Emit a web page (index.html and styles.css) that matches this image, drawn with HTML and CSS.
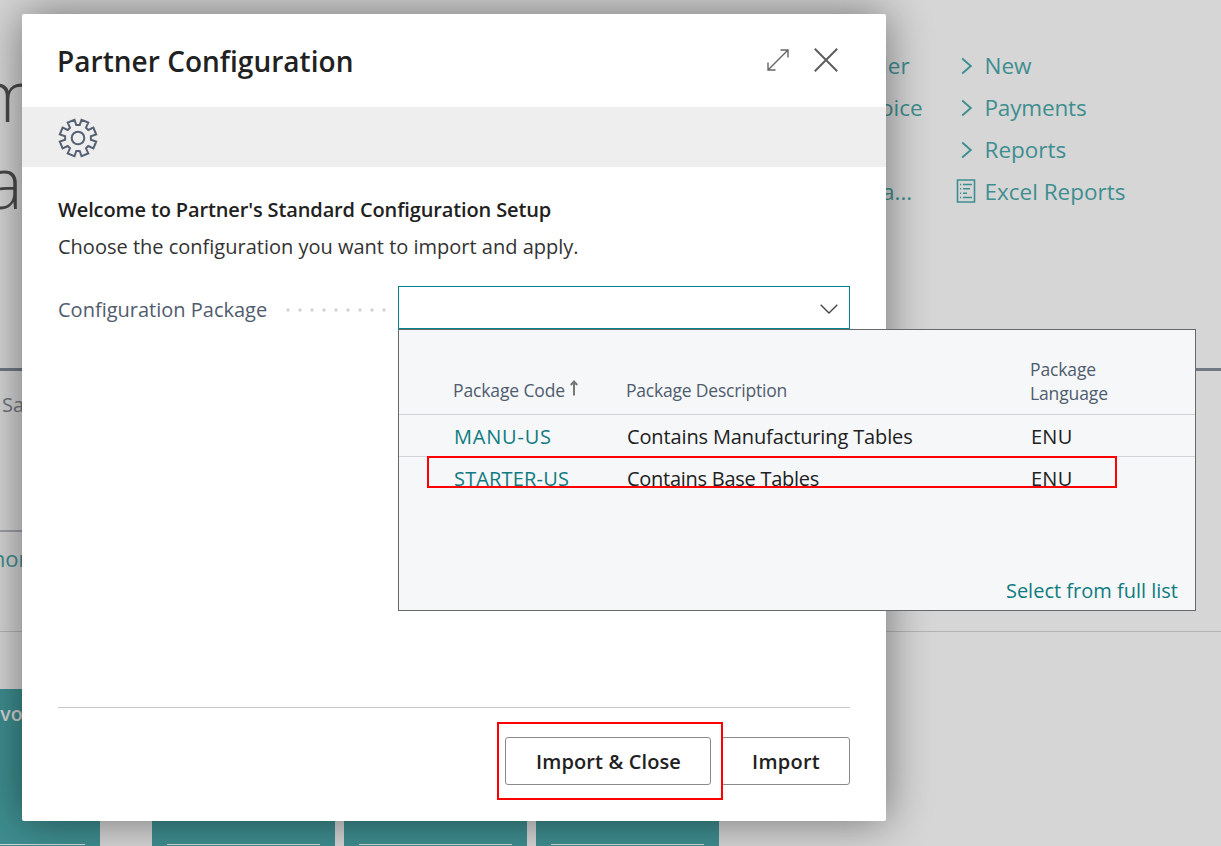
FILE: index.html
```html
<!DOCTYPE html>
<html lang="en">
<head>
<meta charset="utf-8">
<title>Partner Configuration</title>
<link rel="stylesheet" href="styles.css">
</head>
<body>
<div class="app">
  <main class="home">
    <section class="hero">
      <div class="headline"><span class="headline-top">m</span><span class="headline-bottom">a</span></div>
      <ul class="actions actions-create">
        <li class="create-order">der</li>
        <li class="create-invoice">oice</li>
        <li></li>
        <li class="create-other">a...</li>
      </ul>
      <ul class="actions actions-more">
        <li><svg class="chevron" viewBox="0 0 12 18"><path d="M1.2 1.5 L9.8 9 L1.2 16.5"/></svg><span>New</span></li>
        <li><svg class="chevron" viewBox="0 0 12 18"><path d="M1.2 1.5 L9.8 9 L1.2 16.5"/></svg><span class="payments">Payments</span></li>
        <li><svg class="chevron" viewBox="0 0 12 18"><path d="M1.2 1.5 L9.8 9 L1.2 16.5"/></svg><span>Reports</span></li>
        <li><svg class="report" viewBox="0 0 20 24"><path d="M1.5 1h17v22h-17z"/><path d="M4 5.5h1.2M7 5.5h9M4 9.8h1.2M7 9.8h7M4 14.2h1.2M7 14.2h4M4 18.5h1.2M7 18.5h9"/></svg><span>Excel Reports</span></li>
      </ul>
    </section>
    <section class="cue"><span class="cue-name">Sales</span></section>
    <section class="more"><a class="more-link">more</a></section>
    <section class="tiles">
      <div class="tile"><span class="tile-name">Invoices</span></div>
      <div class="tile tile-gap"></div>
      <div class="tile"></div>
      <div class="tile"></div>
    </section>
  </main>

  <div class="dialog">
    <header class="dialog-head">
      <h1>Partner Configuration</h1>
      <svg class="expand" viewBox="0 0 22 22"><path d="M1.5 20.5 L20.5 1.5 M13.5 1 H21 V8.5 M1 13.5 V21 H8.5"/></svg>
      <svg class="close" viewBox="0 0 24 24"><path d="M0.8 0.8 L23.2 23.2 M23.2 0.8 L0.8 23.2"/></svg>
    </header>
    <div class="banner">
      <svg class="gear" viewBox="-20 -20 40 40"><path d="M1.7 -12.9L3.5 -18.2L10.3 -15.4L8 -10.3L10.3 -8L15.4 -10.3L18.2 -3.5L12.9 -1.7V1.7L18.2 3.5L15.4 10.3L10.3 8L8 10.3L10.3 15.4L3.5 18.2L1.7 12.9H-1.7L-3.5 18.2L-10.3 15.4L-8 10.3L-10.3 8L-15.4 10.3L-18.2 3.5L-12.9 1.7V-1.7L-18.2 -3.5L-15.4 -10.3L-10.3 -8L-8 -10.3L-10.3 -15.4L-3.5 -18.2L-1.7 -12.9Z"/><circle r="6.3"/></svg>
    </div>
    <div class="dialog-body">
      <h2>Welcome to Partner's Standard Configuration Setup</h2>
      <p class="hint">Choose the configuration you want to import and apply.</p>
      <div class="field">
        <span class="field-label">Configuration Package</span>
        <span class="dots"></span>
        <div class="combo">
          <svg class="caret" viewBox="0 0 18 10"><path d="M0.7 0.7 L9 9 L17.3 0.7"/></svg>
        </div>
      </div>
    </div>
    <footer class="dialog-foot">
      <button class="btn btn-main">Import &amp; Close</button>
      <button class="btn btn-import">Import</button>
    </footer>
  </div>

  <div class="lookup">
    <div class="row head">
      <span class="code">Package Code<svg class="sort" viewBox="0 0 8 16"><path d="M4 15.5V2M0.8 5L4 1.5L7.2 5"/></svg></span>
      <span class="desc">Package Description</span>
      <span class="lang">Package<br>Language</span>
    </div>
    <div class="row"><span class="code code-manu link">MANU-US</span><span class="desc">Contains Manufacturing Tables</span><span class="lang">ENU</span></div>
    <div class="row last"><span class="code code-starter link">STARTER-US</span><span class="desc desc-base">Contains Base Tables</span><span class="lang">ENU</span></div>
    <a class="full-list link">Select from full list</a>
  </div>

  <div class="mark mark-row"></div>
  <div class="mark mark-button"></div>
</div>
</body>
</html>
```
FILE: styles.css
```css
* { box-sizing: border-box; margin: 0; padding: 0; }
body { font-family: "Open Sans", "Noto Sans", sans-serif; background: #d6d6d6; overflow: hidden; }
svg { display: block; flex: none; fill: none; overflow: visible; }
.app { position: relative; width: 1221px; height: 846px; overflow: hidden; }

.home { display: flex; flex-direction: column; height: 846px; color: #3e8e90; }
.hero { display: flex; height: 371px; border-bottom: 3px solid #727985; }
.headline { display: flex; flex-direction: column; width: 872px; padding-top: 51px; font-size: 71px; font-weight: 300; line-height: 87px; color: #4a4a4a; }
.headline-top { margin-left: -24px; }
.headline-bottom { margin-left: -15px; }
.actions { list-style: none; padding-top: 45px; font-size: 22.5px; line-height: 42px; }
.actions li { display: flex; align-items: center; height: 42px; white-space: nowrap; }
.actions-create { display: flex; flex-direction: column; width: 84px; }
.create-order { padding-left: 2px; }
.create-invoice { padding-left: 8px; }
.create-other { padding-left: 10px; }
.payments { letter-spacing: -.17px; }
.chevron { width: 12px; height: 18px; margin: -1px 12px 0 4.5px; stroke: #3e8e90; stroke-width: 1.9; }
.report { width: 20px; height: 24px; margin: -2px 8.5px 0 0; stroke: #3e8e90; stroke-width: 1.6; }

.cue { height: 161px; padding: 19px 0 0 2px; border-bottom: 2px solid #9da1a9; width: 300px; font-size: 20px; line-height: 30px; color: #6f7681; }
.more { height: 100px; padding-top: 11px; border-bottom: 1px solid #b4b4b4; font-size: 22px; line-height: 30px; }
.more-link { margin-left: -15px; }
.tiles { display: flex; gap: 9px; margin: 57px 0 0 -83px; height: 157px; }
.tile { flex: none; width: 183px; padding: 11px 15px 0; background: linear-gradient(#d6d6d6, #d6d6d6) 15px 155px / 153px 1px no-repeat #3e8e90; font-size: 19.5px; font-weight: 600; line-height: 28px; color: #d6d6d6; }
.tile-gap { margin-left: 43px; }
.tile-name { margin-left: 50px; }

.dialog { position: absolute; left: 22px; top: 14px; width: 864px; height: 807px; display: flex; flex-direction: column; background: #fff; border-radius: 2px; box-shadow: 0 0 45px rgba(0, 0, 0, .48); color: #212121; }
.dialog-head { display: flex; align-items: center; height: 93px; padding: 0 48.5px 0 35px; }
h1 { flex: 1; font-size: 28px; font-weight: 600; line-height: 40px; letter-spacing: .03px; }
.expand { width: 22px; height: 22px; margin: -1px 25px 0 0; stroke: #666; stroke-width: 1.4; }
.close { width: 24px; height: 24px; margin-top: -1px; stroke: #5d5d5d; stroke-width: 2; }
.banner { display: flex; align-items: center; height: 60px; padding-left: 36px; background: #eee; }
.gear { width: 40px; height: 40px; stroke: #566174; stroke-width: 2; margin-top: 2px; }
.dialog-body { flex: 1; padding: 28px 36px 0 36px; }
h2 { font-size: 20px; font-weight: 600; line-height: 30px; letter-spacing: -.13px; }
.hint { margin-top: 7px; font-size: 20px; line-height: 30px; color: #333; }
.field { display: flex; align-items: center; height: 43px; margin-top: 24px; }
.field-label { width: 223.5px; padding-top: 4px; font-size: 20px; line-height: 30px; color: #505c6d; white-space: nowrap; }
.dots { width: 106.5px; height: 4px; margin: 5px 10px 0 0; background: radial-gradient(circle, #d2d4d9 1.4px, transparent 1.9px) 0 0 / 12px 4px; }
.combo { display: flex; align-items: center; justify-content: flex-end; flex: 1; height: 43px; padding-right: 11.5px; border: 1px solid #00838a; }
.caret { width: 18px; height: 10px; margin-top: 3px; stroke: #444; stroke-width: 1.3; }
.dialog-foot { display: flex; justify-content: flex-end; gap: 10px; height: 114px; margin: 0 36px; padding-top: 29px; border-top: 1px solid #c8c8c8; }
.btn { height: 48px; width: 129px; padding: 1px 0 0 1px; border: 1px solid #8a8a8a; border-radius: 3px; background: #fff; font: 600 20px/30px "Open Sans", "Noto Sans", sans-serif; color: #212121; white-space: nowrap; letter-spacing: .25px; }
.btn-main { width: 206px; letter-spacing: .12px; }

.lookup { position: absolute; left: 398px; top: 329px; width: 798px; height: 282px; background: #f5f7f9; border: 1px solid #66686c; color: #212121; display: flex; flex-direction: column; }
.row { display: grid; grid-template-columns: 173px 404px 1fr; align-items: center; height: 42px; padding: 2px 0 0 55px; border-bottom: 1px solid #d2d4da; font-size: 20px; line-height: 30px; white-space: nowrap; }
.row.last { border-bottom: 0; }
.desc { letter-spacing: -.13px; }
.desc-base { letter-spacing: -.27px; }
.lang { letter-spacing: .24px; }
.code-manu { letter-spacing: .8px; }
.code-starter { letter-spacing: .16px; }
.row.head { height: 85px; padding: 26px 0 9px 54px; align-items: end; font-size: 17.5px; line-height: 24px; color: #505c6d; }
.head .code { display: flex; align-items: center; padding-bottom: 3px; letter-spacing: -.13px; }
.head .desc { padding-bottom: 3px; letter-spacing: -.2px; }
.head .lang { letter-spacing: -.12px; }
.sort { width: 8px; height: 16px; margin: -4px 0 0 5px; stroke: #777; stroke-width: 2; }
.link { color: #0f7b80; }
.full-list { margin: auto 17px 4px auto; font-size: 20px; line-height: 30px; }

.mark { position: absolute; border: 2px solid #f00; }
.mark-row { left: 427px; top: 456px; width: 690px; height: 32px; }
.mark-button { left: 497px; top: 722px; width: 226px; height: 78px; }
```
